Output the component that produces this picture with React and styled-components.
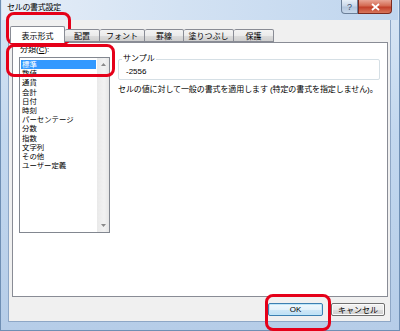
import React from 'react';
import styled, { createGlobalStyle } from 'styled-components';

const GlobalStyle = createGlobalStyle`
  html, body {
    margin: 0;
    padding: 0;
  }
  body {
    width: 400px;
    height: 331px;
    overflow: hidden;
    background: #fff;
    font-family: "Liberation Sans", "Noto Sans CJK JP", sans-serif;
    color: #000;
  }
`;

const categories = [
  '標準',
  '数値',
  '通貨',
  '会計',
  '日付',
  '時刻',
  'パーセンテージ',
  '分数',
  '指数',
  '文字列',
  'その他',
  'ユーザー定義',
];

const tabs = [
  {label: '表示形式', w: 55, active: true},
  {label: '配置', w: 35},
  {label: 'フォント', w: 45},
  {label: '罫線', w: 39},
  {label: '塗りつぶし', w: 50},
  {label: '保護', w: 40},
];

export default function App() {
  return (
    <>
      <GlobalStyle />
      <Window>
        <TitleBar>
          <Title>セルの書式設定</Title>
          <Caption>
            <CaptionButton w={17}>?</CaptionButton>
            <CaptionButton w={34} close>
              <svg width="9" height="8" viewBox="0 0 9 8">
                <path d="M1 1 L8 7 M8 1 L1 7" stroke="#fff" strokeWidth="1.8" />
              </svg>
            </CaptionButton>
          </Caption>
        </TitleBar>

        <Client>
          <TabStrip>
            {tabs.map((t) => (
              <Tab key={t.label} w={t.w} active={t.active}>
                {t.label}
              </Tab>
            ))}
          </TabStrip>

          <Panel>
            <Category>
              <Label>分類(<u>C</u>):</Label>
              <ListBox>
                <ListItems>
                  {categories.map((c, i) => (
                    <Item key={c} selected={i === 0}>
                      {c}
                    </Item>
                  ))}
                </ListItems>
                <ScrollBar>
                  <svg width="5" height="3" viewBox="0 0 5 3">
                    <path d="M0 3 L2.5 0 L5 3 Z" fill="#8a8a8a" />
                  </svg>
                  <svg width="5" height="3" viewBox="0 0 5 3">
                    <path d="M0 0 L2.5 3 L5 0 Z" fill="#8a8a8a" />
                  </svg>
                </ScrollBar>
              </ListBox>
            </Category>

            <Detail>
              <SampleGroup>
                <SampleLegend>サンプル</SampleLegend>
                <SampleValue>-2556</SampleValue>
              </SampleGroup>
              <Description>
                セルの値に対して一般の書式を適用します (特定の書式を指定しません)。
              </Description>
            </Detail>
          </Panel>

          <Footer>
            <Button w={55} primary>OK</Button>
            <Button w={54}>キャンセル</Button>
          </Footer>
        </Client>

        <Marker x={5} y={12} w={65} h={33} />
        <Marker x={5} y={44} w={109} h={33} />
        <Marker x={264} y={294} w={66} h={37} />
      </Window>
    </>
  );
}

const Window = styled.div`
  position: relative;
  width: 400px;
  height: 331px;
  box-sizing: border-box;
  display: flex;
  flex-direction: column;
  padding: 0 8px 8px 7px;
  background: linear-gradient(180deg, #d9e6f4 0%, #c3d8ef 40%, #b6cde8 100%);
  border-left: 1px solid #6f8fb4;
  border-right: 1px solid #6f8fb4;
  border-bottom: 1px solid #6f8fb4;
`;

const TitleBar = styled.div`
  height: 20px;
  display: flex;
  justify-content: space-between;
  align-items: flex-start;
  margin: 0 -7px 0 -6px;
  padding-left: 5px;
  background: linear-gradient(90deg, #e6eef8 0%, #d3e2f3 45%, #bfd5ee 100%);
`;

const Title = styled.div`
  font-size: 8px;
  line-height: 10px;
  margin-top: 3px;
  color: #000;
  letter-spacing: -0.3px;
`;

const Caption = styled.div`
  display: flex;
  margin-right: 6px;
`;

const CaptionButton = styled.div`
  width: ${(p) => p.w}px;
  height: 14px;
  box-sizing: border-box;
  display: flex;
  align-items: center;
  justify-content: center;
  font-size: 9px;
  color: #3b4f6b;
  border: 1px solid ${(p) => (p.close ? '#7c2a1f' : '#6b7f98')};
  border-top: none;
  border-radius: ${(p) => (p.close ? '0 0 4px 0' : '0 0 0 4px')};
  background: ${(p) =>
    p.close
      ? 'linear-gradient(180deg, #e8a595 0%, #d46a52 45%, #c2402a 55%, #d8765c 100%)'
      : 'linear-gradient(180deg, #e8f0f8 0%, #c9d8ea 45%, #b3c6dd 55%, #c8d9ec 100%)'};
`;

const Client = styled.div`
  flex: 1;
  display: flex;
  flex-direction: column;
  padding: 6px 2px 0 3px;
  background: #f0f0f0;
  border: 1px solid #8ea7c6;
  border-top: none;
`;

const TabStrip = styled.div`
  height: 16px;
  display: flex;
  align-items: flex-end;
  position: relative;
  z-index: 1;
`;

const Tab = styled.div`
  width: ${(p) => p.w}px;
  height: ${(p) => (p.active ? 17 : 13)}px;
  box-sizing: border-box;
  display: flex;
  align-items: center;
  justify-content: center;
  font-size: 8px;
  color: #000;
  border: 1px solid #898c95;
  border-left: ${(p) => (p.active ? '1px solid #898c95' : 'none')};
  border-bottom: ${(p) => (p.active ? 'none' : '1px solid #898c95')};
  border-radius: 2px 2px 0 0;
  margin: ${(p) => (p.active ? '0 0 -1px -2px' : '0')};
  background: ${(p) =>
    p.active ? '#fff' : 'linear-gradient(180deg, #f3f3f3 0%, #ebebeb 50%, #dddddd 51%, #cfcfcf 100%)'};
  &:first-child {
    border-left: 1px solid #898c95;
  }
`;

const Panel = styled.div`
  height: 255px;
  box-sizing: border-box;
  display: flex;
  gap: 8px;
  padding: 2px 7px 0 6px;
  background: #fff;
  border: 1px solid #898c95;
`;

const Category = styled.div`
  display: flex;
  flex-direction: column;
`;

const Label = styled.div`
  font-size: 8px;
  line-height: 10px;
  height: 12px;
  padding-left: 1px;
  u {
    text-decoration: underline;
  }
`;

const ListBox = styled.div`
  width: 91px;
  height: 176px;
  box-sizing: border-box;
  display: flex;
  border: 1px solid #828790;
`;

const ListItems = styled.div`
  flex: 1;
  padding: 2px 1px 0 1px;
`;

const Item = styled.div`
  font-size: 7.4px;
  line-height: 9.2px;
  height: 9.2px;
  padding-left: 1px;
  white-space: nowrap;
  color: ${(p) => (p.selected ? '#fff' : '#000')};
  background: ${(p) => (p.selected ? '#3399ff' : 'transparent')};
`;

const ScrollBar = styled.div`
  width: 12px;
  display: flex;
  flex-direction: column;
  align-items: center;
  justify-content: space-between;
  padding: 5px 0 5px;
  box-sizing: border-box;
  background: linear-gradient(90deg, #e9e9e9 0%, #f2f2f2 60%, #e6e6e6 100%);
`;

const Detail = styled.div`
  flex: 1;
  display: flex;
  flex-direction: column;
  padding-top: 14px;
`;

const SampleGroup = styled.div`
  position: relative;
  height: 21px;
  box-sizing: border-box;
  border: 1px solid #d5dfe5;
  border-radius: 2px;
  padding: 7px 0 0 7px;
`;

const SampleLegend = styled.div`
  position: absolute;
  left: 3px;
  top: -6px;
  padding: 0 1px;
  background: #fff;
  font-size: 8px;
  line-height: 10px;
`;

const SampleValue = styled.div`
  font-size: 8px;
  line-height: 10px;
  color: #000;
`;

const Description = styled.div`
  margin-top: 5px;
  font-size: 8px;
  line-height: 10px;
  white-space: nowrap;
  letter-spacing: -0.1px;
`;

const Footer = styled.div`
  flex: 1;
  display: flex;
  justify-content: flex-end;
  align-items: center;
  gap: 8px;
  padding-right: 3px;
`;

const Button = styled.div`
  width: ${(p) => p.w}px;
  height: 13px;
  box-sizing: border-box;
  display: flex;
  align-items: center;
  justify-content: center;
  font-size: 8px;
  color: #000;
  border: 1px solid ${(p) => (p.primary ? '#3c7fb1' : '#707070')};
  border-radius: 2px;
  box-shadow: inset 0 0 0 1px ${(p) => (p.primary ? '#bfe6f9' : '#fbfbfb')};
  background: ${(p) =>
    p.primary
      ? 'linear-gradient(180deg, #f0f8fd 0%, #e3f2fb 50%, #cfe8f7 51%, #bfe0f5 100%)'
      : 'linear-gradient(180deg, #f2f2f2 0%, #ebebeb 50%, #dddddd 51%, #cfcfcf 100%)'};
`;

const Marker = styled.div`
  position: absolute;
  left: ${(p) => p.x}px;
  top: ${(p) => p.y}px;
  width: ${(p) => p.w}px;
  height: ${(p) => p.h}px;
  box-sizing: border-box;
  border: 3px solid #e50019;
  border-radius: 8px;
  pointer-events: none;
`;
